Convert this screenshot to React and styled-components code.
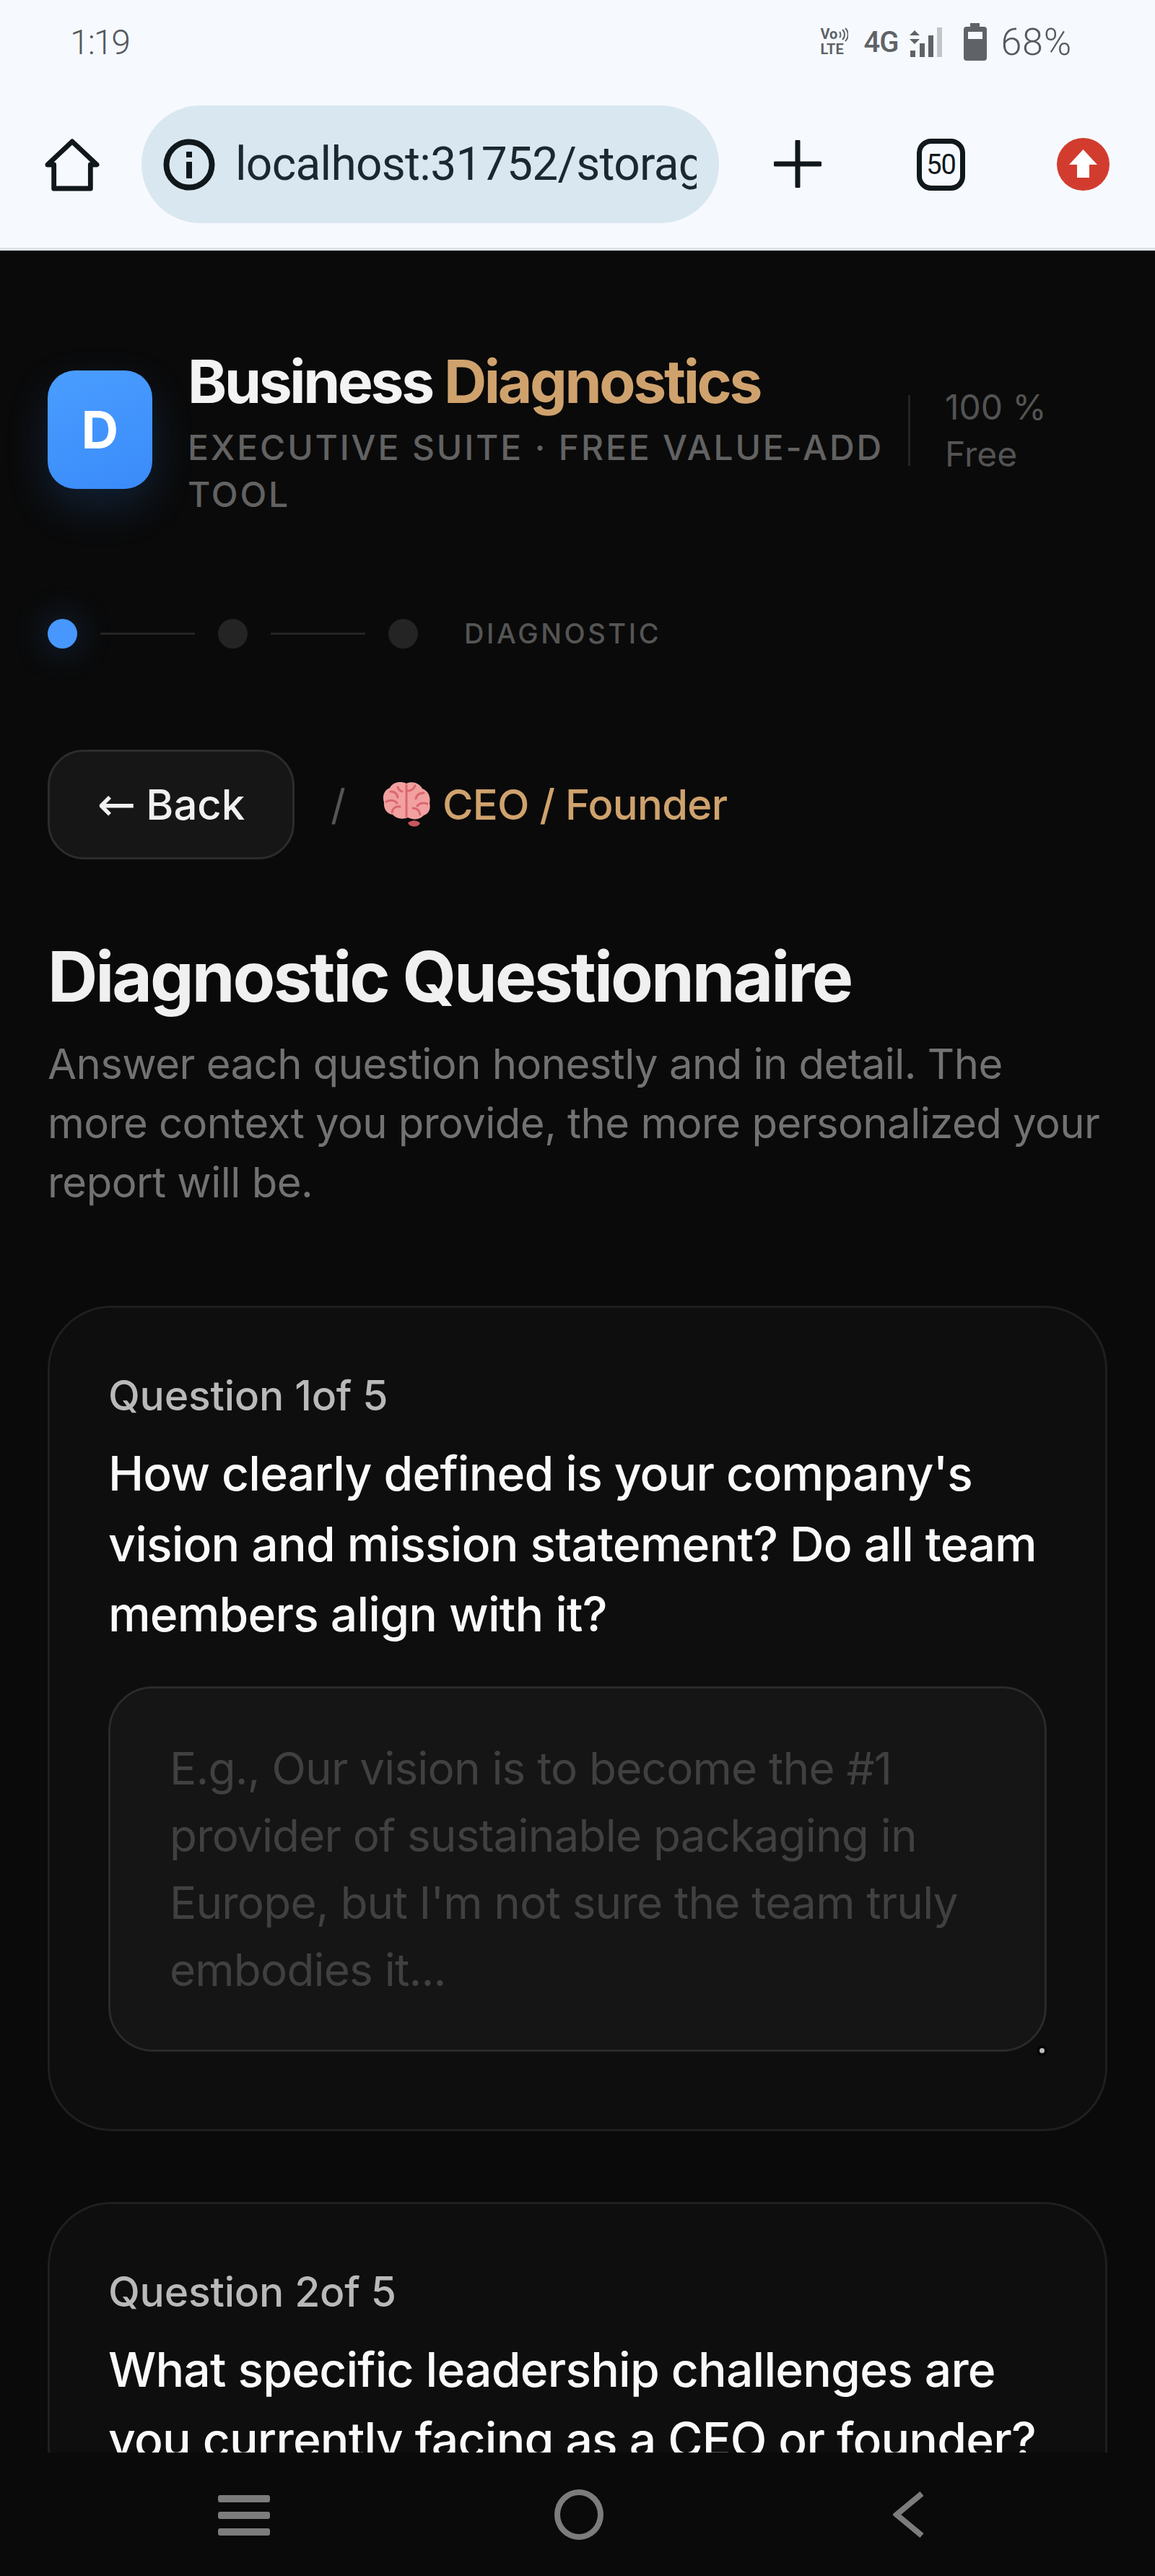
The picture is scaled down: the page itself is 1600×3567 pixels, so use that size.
import React from 'react'
import styled, { createGlobalStyle } from 'styled-components'

const GlobalStyle = createGlobalStyle`
  * { box-sizing: border-box; }
  html, body { margin: 0; padding: 0; background: #0a0a0a; }
  body { font-family: Inter, "Noto Sans", sans-serif; }
`

const Screen = styled.div`
  width: 1600px;
  height: 3567px;
  display: flex;
  flex-direction: column;
  overflow: hidden;
  background: #0a0a0a;
`

const Chrome = styled.div`
  height: 347px;
  flex: none;
  background: #f6faff;
  border-bottom: 4px solid #dfe2e5;
`

const StatusBar = styled.div`
  height: 116px;
  padding: 0 115px 0 97px;
  display: flex;
  align-items: center;
  justify-content: space-between;
  font-family: Roboto, sans-serif;
  font-weight: 300;
  color: #555a5e;
`

const Clock = styled.span`
  font-size: 48px;
  letter-spacing: -2px;
`

const StatusIcons = styled.div`
  display: flex;
  align-items: center;
`

const VolteMark = styled.div`
  width: 42px;
  margin-right: 18px;
  display: flex;
  flex-direction: column;
  align-items: flex-start;
  font-weight: 700;
  line-height: 21px;
  color: #5f6367;
  span { font-size: 20px; }
`

const VoRow = styled.span`
  display: flex;
  align-items: center;
  gap: 1px;
`

const NetworkLabel = styled.span`
  font-size: 40px;
  font-weight: 500;
  margin-right: 15px;
  color: #5f6367;
  letter-spacing: -1px;
`

const Percent = styled.span`
  font-size: 52px;
  margin-left: 19px;
  letter-spacing: 0.8px;
`

const ToolBar = styled.div`
  height: 227px;
  padding: 30px 63px 0 62px;
  display: flex;
  align-items: flex-start;
`

const ToolIcon = styled.svg`
  flex: none;
  display: block;
`

const UrlPill = styled.div`
  width: 800px;
  height: 163px;
  margin-left: 58px;
  padding: 0 31px 0 30px;
  border-radius: 82px;
  background: #d9e7f0;
  display: flex;
  align-items: center;
  gap: 28px;
`

const UrlText = styled.span`
  flex: 1;
  min-width: 0;
  overflow: hidden;
  white-space: nowrap;
  font-family: Roboto, sans-serif;
  font-size: 64px;
  letter-spacing: -0.7px;
  color: #1c2830;
`

const PlusSlot = styled.div`
  margin: 48px 0 0 76px;
`

const TabCounter = styled.div`
  width: 72px;
  height: 72px;
  margin: 46px 0 0 132px;
  border: 7px solid #10181c;
  border-radius: 20px;
  display: flex;
  align-items: center;
  justify-content: center;
  font-family: Roboto, sans-serif;
  font-size: 38px;
  color: #10181c;
  letter-spacing: -1px;
`

const UploadSlot = styled.div`
  margin: 45px 0 0 127px;
`

const Viewport = styled.div`
  flex: 1;
  min-height: 0;
  overflow: hidden;
  padding: 0 66px;
`

const Header = styled.header`
  margin-top: 133px;
  display: flex;
  align-items: center;
`

const LogoBox = styled.div`
  width: 145px;
  height: 164px;
  flex: none;
  margin-bottom: 7px;
  border-radius: 38px;
  background: linear-gradient(160deg, #4a9dff, #3a8bfa);
  box-shadow: 0 24px 60px rgba(58, 139, 250, 0.18);
  color: #fff;
  display: flex;
  align-items: center;
  justify-content: center;
  font-size: 71px;
  font-weight: 700;
`

const Brand = styled.div`
  width: 985px;
  margin-left: 49px;
  flex: none;
`

const BrandTitle = styled.h1`
  margin: 0;
  font-size: 82px;
  line-height: 98px;
  font-weight: 700;
  letter-spacing: -3.3px;
  color: #f3f3f3;
  white-space: nowrap;
  span { color: #cfa26d; }
`

const BrandSub = styled.div`
  margin-top: 9px;
  font-size: 48px;
  line-height: 65px;
  font-weight: 500;
  letter-spacing: 2.85px;
  color: #626262;
  text-transform: uppercase;
`

const UsageRule = styled.span`
  width: 3px;
  height: 98px;
  flex: none;
  margin: 0 0 6px 13px;
  background: #242424;
`

const Usage = styled.div`
  margin: 0 0 6px 48px;
  font-size: 48px;
  line-height: 65px;
  color: #535353;
  white-space: nowrap;
`

const Stepper = styled.div`
  margin-top: 139px;
  height: 42px;
  display: flex;
  align-items: center;
  gap: 32px;
`

const StepDot = styled.span`
  width: 41px;
  height: 41px;
  flex: none;
  border-radius: 50%;
  background: ${p => (p.$active ? '#4797ff' : '#242424')};
  box-shadow: ${p => (p.$active ? '0 0 50px rgba(71, 151, 255, 0.3)' : 'none')};
`

const StepLine = styled.span`
  width: 131px;
  height: 3px;
  flex: none;
  background: #242424;
`

const StepLabel = styled.span`
  margin-left: 32px;
  font-size: 38px;
  font-weight: 500;
  letter-spacing: 3.6px;
  color: #555;
`

const Crumbs = styled.nav`
  margin-top: 140px;
  display: flex;
  align-items: center;
`

const BackButton = styled.button`
  width: 342px;
  height: 152px;
  border: 3px solid #2c2c2c;
  border-radius: 50px;
  background: #161616;
  color: #f0f0f0;
  font-family: inherit;
  font-size: 58px;
  font-weight: 500;
  white-space: nowrap;
  padding: 0;
  display: flex;
  align-items: center;
  justify-content: center;
  gap: 14px;
`

const BackArrow = styled.span`
  font-family: "DejaVu Sans", sans-serif;
  font-size: 64px;
  font-weight: 400;
  line-height: 1;
`

const Slash = styled.span`
  margin-left: 50px;
  font-size: 58px;
  color: #555;
`

const RoleTag = styled.span`
  margin-left: 50px;
  display: flex;
  align-items: center;
  gap: 16px;
  font-size: 58px;
  font-weight: 500;
  letter-spacing: -0.7px;
  color: #cfa26d;
`

const PageTitle = styled.h2`
  margin: 104px 0 0;
  font-size: 96px;
  line-height: 116px;
  font-weight: 700;
  letter-spacing: -3px;
  color: #f0f0f0;
`

const Lead = styled.p`
  margin: 22px 0 0;
  font-size: 58px;
  line-height: 82px;
  letter-spacing: -0.52px;
  color: #727272;
`

const QuestionCard = styled.section`
  margin-top: ${p => p.$gap}px;
  padding: 84px 81px 107px;
  border: 3px solid #1f1f1f;
  border-radius: 88px;
  background: #0e0e0e;
`

const QuestionLabel = styled.div`
  font-size: 57px;
  line-height: 76px;
  font-weight: 500;
  letter-spacing: -0.2px;
  color: #b9b9b9;
`

const QuestionText = styled.h3`
  margin: 21px 0 0;
  font-size: 66px;
  line-height: 97.5px;
  font-weight: 500;
  letter-spacing: -0.8px;
  color: #fafafa;
`

const AnswerWrap = styled.div`
  position: relative;
  margin-top: 50px;
`

const AnswerBox = styled.textarea`
  display: block;
  width: 100%;
  height: 506px;
  padding: 64px 82px 0;
  border: 3px solid #2a2a2a;
  border-radius: 62px;
  background: #151515;
  font-family: inherit;
  font-size: 62px;
  line-height: 93px;
  letter-spacing: -0.8px;
  resize: none;
  outline: none;
  overflow: hidden;
  &::placeholder { color: #404040; opacity: 1; }
`

const ResizeGrip = styled.span`
  position: absolute;
  right: 3px;
  bottom: -2px;
  width: 7px;
  height: 7px;
  border-radius: 50%;
  background: #bdbdbd;
  box-shadow: 0 0 0 4px #050505;
`

const BottomNav = styled.div`
  height: 171px;
  flex: none;
  background: #0a0a0a;
  padding: 51px 0 0 302px;
  display: flex;
  align-items: flex-start;
`

const NavBars = styled.div`
  width: 72px;
  margin-top: 8px;
  display: flex;
  flex-direction: column;
  gap: 13px;
  span {
    height: 10px;
    border-radius: 3px;
    background: #7c7c7c;
  }
`

const NavCircle = styled.div`
  width: 68px;
  height: 70px;
  margin-left: 394px;
  border: 8px solid #7c7c7c;
  border-radius: 50%;
`

const NavBack = styled.svg`
  margin: 3px 0 0 401px;
  display: block;
`

const HomeGlyph = () => (
  <ToolIcon width="76" height="74" viewBox="0 0 78 74" preserveAspectRatio="none" style={{ marginTop: 46 }}>
    <path d="M4 36 39 4l35 32H65v33H13V36z" fill="none" stroke="#10181c" strokeWidth="7" strokeLinejoin="round" />
  </ToolIcon>
)

const InfoGlyph = () => (
  <ToolIcon width="72" height="72" viewBox="0 0 72 72">
    <circle cx="36" cy="36" r="31.5" fill="none" stroke="#10181c" strokeWidth="8" />
    <rect x="32" y="32" width="8" height="23" fill="#10181c" />
    <rect x="32" y="18" width="8" height="8" fill="#10181c" />
  </ToolIcon>
)

const PlusGlyph = () => (
  <ToolIcon width="66" height="66" viewBox="0 0 66 66">
    <path d="M33 2v62M2 33h62" stroke="#10181c" strokeWidth="7" strokeLinecap="round" />
  </ToolIcon>
)

const UploadBadge = () => (
  <ToolIcon width="73" height="73" viewBox="0 0 73 73">
    <circle cx="36.5" cy="36.5" r="36.5" fill="#d23c2e" />
    <path d="M36.5 16 56 37H45v18H28V37H17z" fill="#fff" />
  </ToolIcon>
)

const VoWaves = () => (
  <svg width="14" height="20" viewBox="0 0 14 20" style={{ display: 'block' }}>
    <path d="M2 6c2 2 2 6 0 8M6 3c4 4 4 10 0 14M10 1c5 5 5 13 0 18" fill="none" stroke="#5f6367" strokeWidth="2" />
  </svg>
)

const SignalGlyph = () => (
  <svg width="50" height="44" viewBox="0 0 50 44" style={{ display: 'block' }}>
    <path d="M1 13 8 6l7 7zM1 18h14l-7 7z" fill="#5f6367" />
    <rect x="2" y="34" width="7" height="9" fill="#5f6367" />
    <rect x="15" y="24" width="7" height="19" fill="#5f6367" />
    <rect x="27" y="13" width="7" height="30" fill="#5f6367" />
    <rect x="39" y="2" width="7" height="41" fill="#c3c6c9" />
  </svg>
)

const BatteryGlyph = () => (
  <svg width="32" height="52" viewBox="0 0 32 52" style={{ display: 'block', marginLeft: 26 }}>
    <path d="M9 0h13v5h6a4 4 0 0 1 4 4v39a4 4 0 0 1-4 4H4a4 4 0 0 1-4-4V9a4 4 0 0 1 4-4h5z" fill="#5f6367" />
    <rect x="6" y="12" width="20" height="10" fill="#f6faff" />
  </svg>
)

// pink brain for the role tag
const BrainGlyph = () => (
  <svg width="68" height="64" viewBox="0 0 68 64" style={{ display: 'block', flex: 'none' }}>
    <path d="M36 58c4 6 14 6 17 0-3-4-12-6-17 0z" fill="#c9565f" />
    <path d="M34 3C26-1 15 1 11 9 3 12 0 21 3 29c-1 9 4 16 12 17 5 6 14 7 21 4 8 4 17 3 22-3 7-2 10-9 8-17 2-9-2-17-10-20C52 2 41-1 34 3z" fill="#f2a0a0" />
    <path d="M34 5v44M12 14c6 0 9 3 10 8M6 28c6-3 12-2 15 2M14 43c1-6 5-9 11-8M46 6c-2 5-5 7-10 7M58 16c-6 0-10 3-11 8M63 31c-6-2-11-1-14 3M53 46c-1-6-5-9-10-9M22 8c1 3 3 5 6 6" fill="none" stroke="#d9686f" strokeWidth="3" strokeLinecap="round" />
  </svg>
)

const questions = [
  {
    id: 1,
    text: "How clearly defined is your company's vision and mission statement? Do all team members align with it?",
    hint: "E.g., Our vision is to become the #1 provider of sustainable packaging in Europe, but I'm not sure the team truly embodies it...",
  },
  {
    id: 2,
    text: 'What specific leadership challenges are you currently facing as a CEO or founder?',
    hint: 'E.g., Delegating decisions to my managers...',
  },
]

const App = () => {
  return (
    <Screen>
      <GlobalStyle />
      <Chrome>
        <StatusBar>
          <Clock>1:19</Clock>
          <StatusIcons>
            <VolteMark>
              <VoRow>Vo<VoWaves /></VoRow>
              <span>LTE</span>
            </VolteMark>
            <NetworkLabel>4G</NetworkLabel>
            <SignalGlyph />
            <BatteryGlyph />
            <Percent>68%</Percent>
          </StatusIcons>
        </StatusBar>
        <ToolBar>
          <HomeGlyph />
          <UrlPill>
            <InfoGlyph />
            <UrlText>localhost:31752/storage</UrlText>
          </UrlPill>
          <PlusSlot><PlusGlyph /></PlusSlot>
          <TabCounter>50</TabCounter>
          <UploadSlot><UploadBadge /></UploadSlot>
        </ToolBar>
      </Chrome>

      <Viewport>
        <Header>
          <LogoBox>D</LogoBox>
          <Brand>
            <BrandTitle>Business <span>Diagnostics</span></BrandTitle>
            <BrandSub>Executive Suite · Free Value-Add Tool</BrandSub>
          </Brand>
          <UsageRule />
          <Usage>100 %<br />Free</Usage>
        </Header>

        <Stepper>
          <StepDot $active />
          <StepLine />
          <StepDot />
          <StepLine />
          <StepDot />
          <StepLabel>DIAGNOSTIC</StepLabel>
        </Stepper>

        <Crumbs>
          <BackButton><BackArrow>←</BackArrow>Back</BackButton>
          <Slash>/</Slash>
          <RoleTag><BrainGlyph />CEO / Founder</RoleTag>
        </Crumbs>

        <PageTitle>Diagnostic Questionnaire</PageTitle>
        <Lead>Answer each question honestly and in detail. The more context you provide, the more personalized your report will be.</Lead>

        {questions.map((q, i) => (
          <QuestionCard key={q.id} $gap={i === 0 ? 130 : 98}>
            <QuestionLabel>Question {q.id}of 5</QuestionLabel>
            <QuestionText>{q.text}</QuestionText>
            <AnswerWrap>
              <AnswerBox placeholder={q.hint} readOnly />
              <ResizeGrip />
            </AnswerWrap>
          </QuestionCard>
        ))}
      </Viewport>

      <BottomNav>
        <NavBars><span /><span /><span /></NavBars>
        <NavCircle />
        <NavBack width="44" height="64" viewBox="0 0 44 64">
          <path d="M40 3 5 32l35 29" fill="none" stroke="#7c7c7c" strokeWidth="8" />
        </NavBack>
      </BottomNav>
    </Screen>
  )
}

export default App
